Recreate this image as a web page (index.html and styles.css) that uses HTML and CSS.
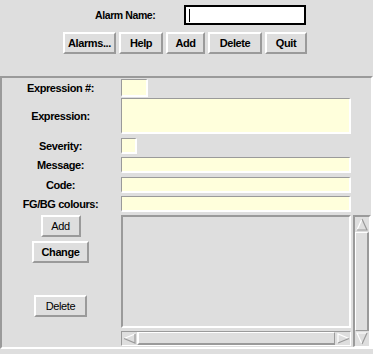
FILE: index.html
```html
<!DOCTYPE html>
<html>
<head>
<meta charset="utf-8">
<link rel="stylesheet" href="styles.css">
</head>
<body>
<div class="top">
  <div class="name-row">
    <span class="name-label">Alarm Name:</span>
    <div class="name-input"><span class="caret"></span></div>
  </div>
  <div class="btn-row">
    <button class="btn w-alarms">Alarms...</button>
    <button class="btn w-help">Help</button>
    <button class="btn w-add">Add</button>
    <button class="btn w-delete">Delete</button>
    <button class="btn w-quit">Quit</button>
  </div>
</div>
<div class="panel">
  <div class="row r1">
    <div class="label">Expression #:</div>
    <div class="field f-num"></div>
  </div>
  <div class="row r2">
    <div class="label">Expression:</div>
    <div class="field f-wide f-tall"></div>
  </div>
  <div class="row r3">
    <div class="label">Severity:</div>
    <div class="field f-sev"></div>
  </div>
  <div class="row r4">
    <div class="label">Message:</div>
    <div class="field f-wide"></div>
  </div>
  <div class="row r5">
    <div class="label">Code:</div>
    <div class="field f-wide"></div>
  </div>
  <div class="row r6">
    <div class="label">FG/BG colours:</div>
    <div class="field f-wide"></div>
  </div>
  <div class="row r7">
    <div class="side">
      <button class="btn sbtn light w-sadd">Add</button>
      <button class="btn sbtn w-change b-change">Change</button>
      <button class="btn sbtn light w-sdel b-del">Delete</button>
    </div>
    <div class="listcol">
      <div class="listbox"></div>
      <div class="hscroll">
        <div class="arrow">
          <svg width="14" height="11" viewBox="0 0 14 11"><polyline points="12,1 1,5.5" fill="none" stroke="#fff" stroke-width="1.2"/><polyline points="1,5.5 12,10 12,1" fill="none" stroke="#9a9a9a" stroke-width="1.2"/></svg>
        </div>
        <div class="hthumb"></div>
        <div class="arrow">
          <svg width="14" height="11" viewBox="0 0 14 11"><polyline points="2,10 2,1 13,5.5" fill="none" stroke="#fff" stroke-width="1.2"/><polyline points="13,5.5 2,10" fill="none" stroke="#9a9a9a" stroke-width="1.2"/></svg>
        </div>
      </div>
    </div>
    <div class="vscroll">
      <div class="varrow">
        <svg width="12" height="13" viewBox="0 0 12 13"><polyline points="1,12 6,1" fill="none" stroke="#fff" stroke-width="1.2"/><polyline points="6,1 11,12 1,12" fill="none" stroke="#9a9a9a" stroke-width="1.2"/></svg>
      </div>
      <div class="vthumb"></div>
      <div class="varrow">
        <svg width="12" height="13" viewBox="0 0 12 13"><polyline points="11,1 1,1 6,12" fill="none" stroke="#fff" stroke-width="1.2"/><polyline points="6,12 11,1" fill="none" stroke="#9a9a9a" stroke-width="1.2"/></svg>
      </div>
    </div>
  </div>
</div>
</body>
</html>
```
FILE: styles.css
```css
* { box-sizing: border-box; }
html, body { margin: 0; padding: 0; }
body {
  width: 373px;
  height: 354px;
  background: #dedede;
  font-family: "Liberation Sans", Arial, sans-serif;
  font-size: 11px;
  font-weight: bold;
  letter-spacing: -0.4px;
  color: #000;
  overflow: hidden;
}
.top {
  height: 76px;
  padding-top: 5px;
}
.name-row {
  display: flex;
  align-items: center;
  padding-left: 95px;
  height: 20px;
}
.name-label {
  width: 89px;
  font-size: 10.5px;
}
.name-input {
  width: 122px;
  height: 20px;
  border: 2px solid #000;
  background: #fff;
  display: flex;
  align-items: center;
  padding-left: 3px;
}
.caret {
  width: 1px;
  height: 13px;
  background: #000;
}
.btn-row {
  display: flex;
  gap: 3px;
  padding-left: 63px;
  margin-top: 7px;
}
.btn {
  height: 22px;
  padding: 0;
  margin: 0;
  background: #dedede;
  border-style: solid;
  border-width: 2px;
  border-color: #fff #9a9a9a #9a9a9a #fff;
  font-family: inherit;
  font-size: 11px;
  font-weight: bold;
  letter-spacing: -0.4px;
  color: #000;
  display: flex;
  align-items: center;
  justify-content: center;
}
.w-alarms { width: 53px; }
.w-help { width: 44px; }
.w-add { width: 39px; }
.w-delete { width: 54px; }
.w-quit { width: 42px; }

.panel {
  height: 273px;
  border-style: solid;
  border-width: 2px;
  border-color: #9a9a9a #fff #fff #9a9a9a;
  padding-top: 1px;
  display: flex;
  flex-direction: column;
}
.row {
  display: flex;
  align-items: center;
}
.label {
  width: 117px;
  margin-right: 2px;
  text-align: center;
}
.field {
  height: 16px;
  background: #ffffdc;
  border-style: solid;
  border-width: 1px 2px 2px 1px;
  border-color: #9a9a9a #fff #fff #9a9a9a;
}
.f-num { width: 27px; height: 18px; }
.f-wide { width: 230px; }
.f-tall { height: 36px; }
.f-sev { width: 16px; }
.r2 { margin-top: 1px; }
.r3 { margin-top: 4px; }
.r4 { margin-top: 3px; }
.r5 { margin-top: 4px; }
.r6 { margin-top: 3px; }
.r7 {
  margin-top: 3px;
  height: 132px;
  align-items: flex-start;
}
.side {
  width: 117px;
  margin-right: 2px;
  display: flex;
  flex-direction: column;
  align-items: center;
}
.sbtn { flex: none; }
.light { font-weight: normal; }
.w-sadd { width: 40px; }
.w-change { width: 57px; }
.w-sdel { width: 53px; }
.b-change { margin-top: 4px; }
.b-del { margin-top: 32px; }
.listcol {
  width: 230px;
  display: flex;
  flex-direction: column;
}
.listbox {
  height: 113px;
  border-style: solid;
  border-width: 2px;
  border-color: #9a9a9a #fff #fff #9a9a9a;
}
.hscroll {
  margin-top: 3px;
  height: 15px;
  display: flex;
  border-style: solid;
  border-width: 1px;
  border-color: #9a9a9a #fff #fff #9a9a9a;
}
.arrow {
  width: 15px;
  display: flex;
  align-items: center;
  justify-content: center;
}
.hthumb {
  flex: 1;
  border-style: solid;
  border-width: 1px 1px 2px 2px;
  border-color: #fff #9a9a9a #9a9a9a #fff;
}
.vscroll {
  margin-left: 2px;
  width: 18px;
  height: 132px;
  display: flex;
  flex-direction: column;
  border-style: solid;
  border-width: 2px 2px 1px 2px;
  border-color: #9a9a9a #fff #fff #9a9a9a;
}
.varrow {
  height: 15px;
  display: flex;
  align-items: center;
  justify-content: center;
}
.vthumb {
  flex: 1;
  border-style: solid;
  border-width: 1px 2px 1px 1px;
  border-color: #fff #9a9a9a #9a9a9a #fff;
}
```
